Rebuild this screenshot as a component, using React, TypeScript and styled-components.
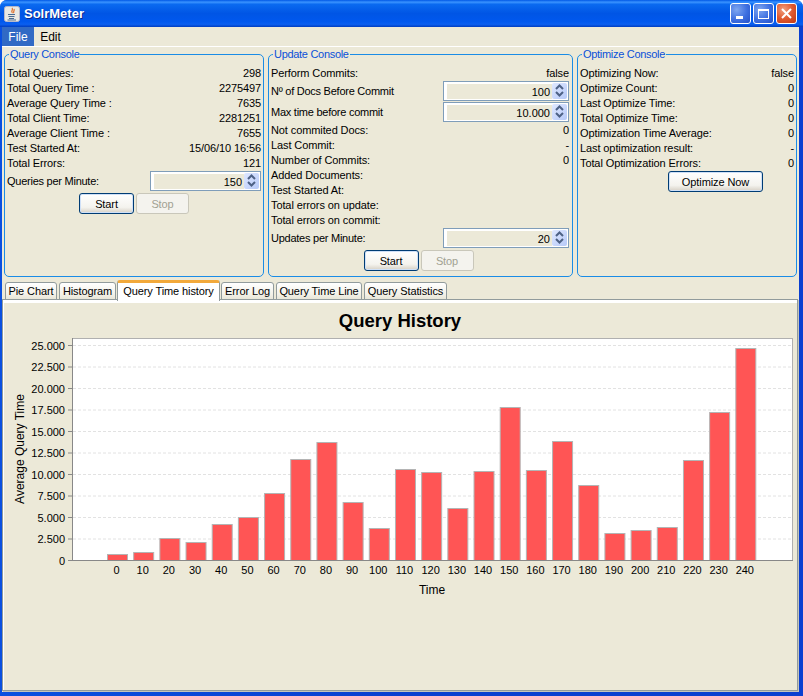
import React from "react";
import styled, { createGlobalStyle } from "styled-components";

const Global = createGlobalStyle`
  html, body { margin: 0; padding: 0; background: #fff; }
  body { font-family: "Liberation Sans", Arial, sans-serif; font-size: 11px; color: #000; letter-spacing: -0.1px; }
`;

const Win = styled.div`
  width: 803px; height: 696px; box-sizing: border-box; display: flex; flex-direction: column;
  background: linear-gradient(90deg, #0a50e0 0, #0a3fd0 50%, #0a3fd0 100%); border-radius: 7px 7px 0 0; overflow: hidden;
`;
const TitleBar = styled.div`
  height: 27px; flex: none; display: flex; align-items: center; padding: 0 6px 0 4px; box-sizing: border-box; gap: 4px;
  background: linear-gradient(180deg, #0058e6 0%, #3a93ff 8%, #0a6af0 16%, #0055e5 50%, #0058ee 80%, #0a5ff0 90%, #003dc0 100%);
`;
const AppIcon = styled.svg`width: 16px; height: 16px; flex: none;`;
const TitleText = styled.div`
  flex: 1; color: #fff; font: bold 13px "Liberation Sans", sans-serif; letter-spacing: 0; text-shadow: 1px 1px 0 #0a2a90;
`;
const Controls = styled.div`display: flex; gap: 2px;`;
const CtrlBtn = styled.div<{ $close?: boolean }>`
  width: 21px; height: 21px; box-sizing: border-box; border: 1px solid #fff; border-radius: 3px; display: flex; align-items: center; justify-content: center;
  background: ${p => p.$close
    ? "radial-gradient(circle at 35% 30%, #f0a080 0%, #e0592f 50%, #c03a15 100%)"
    : "radial-gradient(circle at 30% 30%, #7ea6f0 0%, #3d6fe0 55%, #2450c8 100%)"};
`;
const Client = styled.div`
  flex: 1; margin: 0 4px 4px 2px; background: #ece9d8; display: flex; flex-direction: column; min-height: 0;
`;
const MenuBar = styled.div`
  height: 19px; flex: none; display: flex; background: #ece9d8; border-bottom: 1px solid #fff; font-size: 12px; letter-spacing: 0;
`;
const MenuItem = styled.div<{ $active?: boolean }>`
  width: ${p => (p.$active ? 32 : 33)}px; display: flex; align-items: center; justify-content: center;
  background: ${p => (p.$active ? "#316ac5" : "transparent")}; color: ${p => (p.$active ? "#fff" : "#000")};
`;
const Consoles = styled.div`
  display: grid; grid-template-columns: 260px 305px 220px; column-gap: 4px; padding: 1px 0 0 2px; height: 231px; flex: none; box-sizing: border-box;
`;
const Console = styled.fieldset<{ $pr?: number }>`
  margin: 0; padding: 4px ${p => p.$pr ?? 2}px 0 2px; min-width: 0; border: 1px solid #1a8ce6; border-radius: 5px; display: flex; flex-direction: column; height: 229px; box-sizing: border-box;
`;
const Legend = styled.legend`
  color: #0a50d8; padding: 0 1px; margin-left: 2px; font-size: 11px; line-height: 13px; letter-spacing: -0.3px;
`;
const Row = styled.div`
  height: 15px; box-sizing: border-box; padding-top: 2px; display: flex; justify-content: space-between; align-items: center; white-space: nowrap; line-height: 13px; flex: none;
`;
const SpinRow = styled.div<{ $h: number }>`
  height: ${p => p.$h}px; display: flex; justify-content: space-between; align-items: center; flex: none;
  letter-spacing: -0.25px;
`;
const Spin = styled.div<{ $w: number }>`
  width: ${p => p.$w}px; height: 20px; box-sizing: border-box; border: 1px solid #7f9db9; display: flex; background: #fff; padding: 1px;
  letter-spacing: 0;
`;
const SpinField = styled.div`
  flex: 1; background: #ece9d8; border-left: 2px solid #fff; border-top: 1px solid #fff; text-align: right; line-height: 16px; padding-right: 2px;
`;
const SpinBtn = styled.div`
  width: 15px; background: linear-gradient(135deg, #dfe8ff, #b6c9f8); border-radius: 2px; display: flex; align-items: center; justify-content: center;
`;
const Buttons = styled.div<{ $top: number; $end?: boolean; $pad?: number }>`
  display: flex; justify-content: ${p => (p.$end ? "flex-end" : "center")}; gap: 2px; margin-top: ${p => p.$top}px; flex: none;
  padding-right: ${p => p.$pad ?? 0}px;
`;
const Btn = styled.div<{ $w: number; $off?: boolean }>`
  width: ${p => p.$w}px; height: 21px; box-sizing: border-box; border-radius: 3px; display: flex; align-items: center; justify-content: center;
  border: 1px solid ${p => (p.$off ? "#c9c7ba" : "#003c74")};
  color: ${p => (p.$off ? "#a1a192" : "#000")};
  background: ${p => (p.$off ? "#f4f3ee" : "linear-gradient(180deg, #fff 0%, #f4f3ee 70%, #d6d0c5 100%)")};
  box-shadow: ${p => (p.$off ? "none" : "inset 0 0 0 1px #cfe0f7")};
`;
const TabStrip = styled.div`
  height: 22px; flex: none; display: flex; align-items: flex-end; padding-left: 3px; gap: 2px; position: relative; z-index: 1;
`;
const Tab = styled.div<{ $w: number; $active?: boolean }>`
  width: ${p => p.$w}px; box-sizing: border-box; text-align: center; white-space: nowrap;
  height: ${p => (p.$active ? 21 : 18)}px;
  margin: ${p => (p.$active ? "0 -1px -1px -1px" : "0")};
  line-height: ${p => (p.$active ? 16 : 17)}px;
  border: 1px solid #919b9c; border-bottom: ${p => (p.$active ? "none" : "1px solid #919b9c")}; border-radius: 3px 3px 0 0;
  border-top: ${p => (p.$active ? "3px solid #f2a93b" : "1px solid #919b9c")};
  background: ${p => (p.$active ? "#fff" : "linear-gradient(180deg, #fff 0%, #f3f1e8 70%, #e8e6d8 100%)")};
`;
const Pane = styled.div`
  flex: 1; min-height: 0; border: 1px solid #919b9c; margin: -1px 1px 1px 0; background: #ece9d8;
  box-shadow: inset 0 3px 0 #fff, inset 1px 0 0 #fff, 1px 1px 0 #c4c4bc; padding: 3px 0 0 1px; box-sizing: border-box; display: flex;
`;
const ChartSvg = styled.svg`
  display: block; width: 793px; height: 387px; flex: none; letter-spacing: 0;
`;

const Chev = () => (
  <svg width="9" height="15" viewBox="0 0 9 15" fill="none" stroke="#4d6185" strokeWidth="2">
    <path d="M1 6 L4.5 2.5 L8 6" />
    <path d="M1 9 L4.5 12.5 L8 9" />
  </svg>
);
const Spinner = ({ w, v }: { w: number; v: string }) => (
  <Spin $w={w}><SpinField>{v}</SpinField><SpinBtn><Chev /></SpinBtn></Spin>
);
const Pair = ({ k, v }: { k: string; v?: string }) => (<Row><span>{k}</span><span>{v}</span></Row>);

const tops = [554.5, 552.5, 538.5, 542.5, 524.5, 517.5, 493.5, 459.5, 442.5, 502.5, 528.5, 469.5, 472.5, 508.5, 471.5, 407.5, 470.5, 441.5, 485.5, 533.5, 530.5, 527.5, 460.5, 412.5, 348.5];
const yTicks = ["0", "2.500", "5.000", "7.500", "10.000", "12.500", "15.000", "17.500", "20.000", "22.500", "25.000"];
const yOf = (i: number) => 560.5 - i * 21.5;
const F = "Liberation Sans, Arial, sans-serif";

const Chart = () => (
  <ChartSvg viewBox="4 303 793 387">
    <text x="400" y="327" textAnchor="middle" fontFamily={F} fontWeight="bold" fontSize="18.5">Query History</text>
    <rect x="72.5" y="338.5" width="720" height="222" fill="#fff" stroke="#b0b0b0" />
    {yTicks.map((t, i) => {
      const y = yOf(i);
      return (
        <g key={t}>
          {i > 0 && <line x1="73" x2="792" y1={y} y2={y} stroke="#e2e2e2" strokeDasharray="3 2" />}
          <line x1="68" x2="72" y1={y} y2={y} stroke="#888" />
          <text x="65" y={y + 4} textAnchor="end" fontFamily={F} fontSize="11">{t}</text>
        </g>
      );
    })}
    {tops.map((t, i) => {
      const x = 107.5 + i * 26.18;
      return (
        <g key={i}>
          <rect x={x} y={t} width="20" height={560.5 - t} fill="#ff5555" stroke="#b4b4b4" />
          <text x={x + 9} y="574" textAnchor="middle" fontFamily={F} fontSize="11">{i * 10}</text>
        </g>
      );
    })}
    <line x1="72.5" x2="72.5" y1="338" y2="561" stroke="#888" />
    <line x1="68" x2="793" y1="560.5" y2="560.5" stroke="#888" />
    <text x="432" y="594" textAnchor="middle" fontFamily={F} fontSize="12">Time</text>
    <text transform="translate(24 449) rotate(-90)" textAnchor="middle" fontFamily={F} fontSize="12">Average Query Time</text>
  </ChartSvg>
);

export default function App() {
  return (
    <Win>
      <Global />
      <TitleBar>
        <AppIcon viewBox="0 0 16 16">
          <rect x="0.5" y="0.5" width="15" height="15" rx="2" fill="#e8e8e4" stroke="#b8b8c8" />
          <path d="M8 2 C10 4 6 5 8.5 7 M10 3 C11 5 8.5 5.5 10 7" stroke="#e0702a" strokeWidth="1.2" fill="none" />
          <path d="M4 8.5 H11 M4.5 10.5 H10.5 M5 12.5 H10 M3.5 14 H12" stroke="#4a6a90" strokeWidth="1" fill="none" />
        </AppIcon>
        <TitleText>SolrMeter</TitleText>
        <Controls>
          <CtrlBtn>
            <svg width="13" height="13" viewBox="0 0 13 13"><rect x="2" y="9" width="7" height="3" fill="#fff" /></svg>
          </CtrlBtn>
          <CtrlBtn>
            <svg width="13" height="13" viewBox="0 0 13 13" fill="none" stroke="#fff"><rect x="1.5" y="2.5" width="10" height="9" /><path d="M1 3 H12" strokeWidth="2" /></svg>
          </CtrlBtn>
          <CtrlBtn $close>
            <svg width="13" height="13" viewBox="0 0 13 13" stroke="#fff" strokeWidth="2"><path d="M2 2 L11 11 M11 2 L2 11" /></svg>
          </CtrlBtn>
        </Controls>
      </TitleBar>
      <Client>
        <MenuBar><MenuItem $active>File</MenuItem><MenuItem>Edit</MenuItem></MenuBar>
        <Consoles>
          <Console>
            <Legend>Query Console</Legend>
            <Pair k="Total Queries:" v="298" />
            <Pair k="Total Query Time :" v="2275497" />
            <Pair k="Average Query Time :" v="7635" />
            <Pair k="Total Client Time:" v="2281251" />
            <Pair k="Average Client Time :" v="7655" />
            <Pair k="Test Started At:" v="15/06/10 16:56" />
            <Pair k="Total Errors:" v="121" />
            <SpinRow $h={21}><span>Queries per Minute:</span><Spinner w={111} v="150" /></SpinRow>
            <Buttons $top={2}><Btn $w={55}>Start</Btn><Btn $w={53} $off>Stop</Btn></Buttons>
          </Console>
          <Console $pr={3}>
            <Legend>Update Console</Legend>
            <Pair k="Perform Commits:" v="false" />
            <SpinRow $h={21}><span>Nº of Docs Before Commit</span><Spinner w={126} v="100" /></SpinRow>
            <SpinRow $h={21}><span>Max time before commit</span><Spinner w={126} v="10.000" /></SpinRow>
            <Pair k="Not commited Docs:" v="0" />
            <Pair k="Last Commit:" v="-" />
            <Pair k="Number of Commits:" v="0" />
            <Pair k="Added Documents:" />
            <Pair k="Test Started At:" />
            <Pair k="Total errors on update:" />
            <Pair k="Total errors on commit:" />
            <SpinRow $h={21}><span>Updates per Minute:</span><Spinner w={126} v="20" /></SpinRow>
            <Buttons $top={2} $pad={3}><Btn $w={55}>Start</Btn><Btn $w={53} $off>Stop</Btn></Buttons>
          </Console>
          <Console>
            <Legend>Optimize Console</Legend>
            <Pair k="Optimizing Now:" v="false" />
            <Pair k="Optimize Count:" v="0" />
            <Pair k="Last Optimize Time:" v="0" />
            <Pair k="Total Optimize Time:" v="0" />
            <Pair k="Optimization Time Average:" v="0" />
            <Pair k="Last optimization result:" v="-" />
            <Pair k="Total Optimization Errors:" v="0" />
            <Buttons $top={1} $end $pad={31}><Btn $w={95}>Optimize Now</Btn></Buttons>
          </Console>
        </Consoles>
        <TabStrip>
          <Tab $w={52}>Pie Chart</Tab>
          <Tab $w={57}>Histogram</Tab>
          <Tab $w={103} $active>Query Time history</Tab>
          <Tab $w={53}>Error Log</Tab>
          <Tab $w={86}>Query Time Line</Tab>
          <Tab $w={83}>Query Statistics</Tab>
        </TabStrip>
        <Pane><Chart /></Pane>
      </Client>
    </Win>
  );
}
